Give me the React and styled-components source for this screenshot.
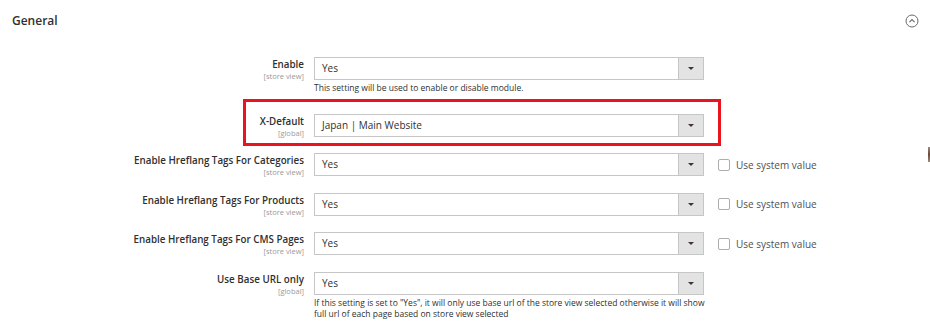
import React from 'react'
import styled, { createGlobalStyle } from 'styled-components'

const GlobalStyle = createGlobalStyle`
  html, body {
    margin: 0;
    padding: 0;
    background: #ffffff;
  }
  body {
    font-family: 'Open Sans', 'Noto Sans', 'Liberation Sans', sans-serif;
    color: #303030;
  }
`

const rows = [
  {
    label: 'Enable',
    scope: '[store view]',
    value: 'Yes',
    note: 'This setting will be used to enable or disable module.',
  },
  { label: 'X-Default', scope: '[global]', value: 'Japan | Main Website', highlighted: true },
  { label: 'Enable Hreflang Tags For Categories', scope: '[store view]', value: 'Yes', system: true },
  { label: 'Enable Hreflang Tags For Products', scope: '[store view]', value: 'Yes', system: true },
  { label: 'Enable Hreflang Tags For CMS Pages', scope: '[store view]', value: 'Yes', system: true },
  {
    label: 'Use Base URL only',
    scope: '[global]',
    value: 'Yes',
    note: 'If this setting is set to "Yes", it will only use base url of the store view selected otherwise it will show full url of each page based on store view selected',
  },
]

const App = () => {
  return (
    <>
      <GlobalStyle />
      <Section>
        <Header>
          <Title>General</Title>
          <Collapse viewBox="0 0 14 14" aria-hidden="true">
            <circle cx="7" cy="7" r="6" fill="none" stroke="#6b6b6b" strokeWidth="1" />
            <path d="M4.4 8.2 L7 5.6 L9.6 8.2" fill="none" stroke="#6b6b6b" strokeWidth="1.1" />
          </Collapse>
        </Header>
        <Fieldset>
          {rows.map((row) => (
            <Row key={row.label} $highlighted={row.highlighted}>
              <Label>
                <LabelText>{row.label}</LabelText>
                <Scope>{row.scope}</Scope>
              </Label>
              <Control>
                <Select>
                  <SelectValue>{row.value}</SelectValue>
                  <SelectButton>
                    <Caret />
                  </SelectButton>
                </Select>
                {row.note && <Note>{row.note}</Note>}
              </Control>
              {row.system && (
                <SystemValue>
                  <Checkbox />
                  <span>Use system value</span>
                </SystemValue>
              )}
            </Row>
          ))}
        </Fieldset>
        <EdgeMark />
      </Section>
    </>
  )
}

const Section = styled.div`
  position: relative;
  width: 930px;
  height: 332px;
  overflow: hidden;
`

const Header = styled.div`
  height: 42px;
  padding: 0 11px 0 12px;
  display: flex;
  align-items: center;
  justify-content: space-between;
`

const Title = styled.div`
  font-size: 12px;
  font-weight: 600;
  color: #303030;
  line-height: 16px;
`

const Collapse = styled.svg`
  width: 14px;
  height: 14px;
  display: block;
`

const Fieldset = styled.div`
  margin-top: 15px;
  display: flex;
  flex-direction: column;
  gap: 15.5px;
`

const Row = styled.div`
  position: relative;
  display: grid;
  grid-template-columns: 304px 390px auto;
  column-gap: 10px;
  align-items: start;

  ${(p) =>
    p.$highlighted &&
    `
    &::before {
      content: '';
      position: absolute;
      left: 243px;
      top: -15px;
      width: 478px;
      height: 47px;
      box-sizing: border-box;
      border: 3px solid #e8141e;
      pointer-events: none;
    }
  `}
`

const Label = styled.div`
  text-align: right;
  padding-top: 1px;
`

const LabelText = styled.div`
  font-size: 9.8px;
  font-weight: 600;
  line-height: 14px;
  color: #303030;
`

const Scope = styled.div`
  font-size: 7.5px;
  line-height: 9px;
  color: #9a9a9a;
`

const Control = styled.div`
  display: flex;
  flex-direction: column;
`

const Select = styled.div`
  height: 23px;
  box-sizing: border-box;
  border: 1px solid #c6c6c6;
  display: flex;
  align-items: stretch;
  background: #fff;
`

const SelectValue = styled.div`
  flex: 1;
  padding-left: 7px;
  font-size: 10px;
  line-height: 21px;
  color: #303030;
`

const SelectButton = styled.div`
  width: 24px;
  border-left: 1px solid #c6c6c6;
  background: #e3e3e3;
  display: flex;
  align-items: center;
  justify-content: center;
`

const Caret = styled.div`
  width: 0;
  height: 0;
  border-left: 3px solid transparent;
  border-right: 3px solid transparent;
  border-top: 3px solid #41362f;
`

const Note = styled.div`
  width: 400px;
  margin-top: 2px;
  padding-bottom: 5px;
  font-size: 8.5px;
  line-height: 11px;
  color: #303030;
`

const SystemValue = styled.label`
  margin-left: 4px;
  height: 23px;
  display: flex;
  align-items: center;
  gap: 6px;
  font-size: 10px;
  color: #505050;
  white-space: nowrap;
`

const Checkbox = styled.span`
  width: 12px;
  height: 12px;
  box-sizing: border-box;
  border: 1px solid #adadad;
  border-radius: 2px;
  background: #fff;
`

const EdgeMark = styled.div`
  position: absolute;
  right: 0;
  top: 147px;
  width: 2px;
  height: 15px;
  background: linear-gradient(#9a8a80, #6e4a3a, #9a8a80);
`

export default App
